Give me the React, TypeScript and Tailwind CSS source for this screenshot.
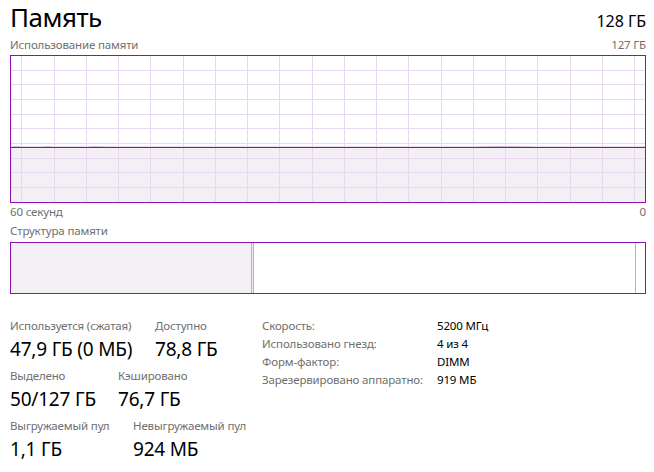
import React from "react";

const PURPLE = "#8b12ae";
const GRID = "#e8d8ef";
const FILL = "#f2f0f4";

// chart inner area (inside the 1px border)
const CW = 634;
const CH = 146;
const USED_Y = 91;

const vLines = Array.from({ length: 20 }, (_, k) => Math.round(10.3 + 32.26 * k) + 0.5);
const hLines = Array.from({ length: 9 }, (_, k) => Math.round(14.65 * (k + 1)) - 0.5);

// small wobbles of the usage line over the last minute
const bumps: [number, number][] = [
  [1, 10],
  [32, 41],
  [77, 94],
  [466, 523],
];

function UsageChart() {
  return (
    <div className="mt-[2px] h-[148px] w-[636px] border border-[#8b12ae]">
      <svg width={CW} height={CH} viewBox={`0 0 ${CW} ${CH}`} className="block">
        <rect x={0} y={USED_Y} width={CW} height={CH - USED_Y} fill={FILL} />
        {vLines.map((x) => (
          <line key={`v${x}`} x1={x} y1={0} x2={x} y2={CH} stroke={GRID} strokeWidth={1} />
        ))}
        {hLines.map((y) => (
          <line key={`h${y}`} x1={0} y1={y} x2={CW} y2={y} stroke={GRID} strokeWidth={1} />
        ))}
        <line x1={0} y1={USED_Y - 0.5} x2={CW} y2={USED_Y - 0.5} stroke="#ead9f0" strokeWidth={1} />
        {bumps.map(([a, b]) => (
          <path
            key={a}
            d={`M${a} ${USED_Y + 0.5} C${a + 3} ${USED_Y - 0.6} ${b - 3} ${USED_Y - 0.6} ${b} ${USED_Y + 0.5}`}
            fill="none"
            stroke="#cfa9dc"
            strokeWidth={1}
          />
        ))}
        <line x1={0} y1={USED_Y + 0.5} x2={CW} y2={USED_Y + 0.5} stroke={PURPLE} strokeWidth={1} />
      </svg>
    </div>
  );
}

function CompositionBar() {
  return (
    <div className="mt-[3px] flex h-[52px] w-[636px] border border-[#8b12ae]">
      <div className="w-[240px] bg-[#f2f0f4]" />
      <div className="w-[1px] bg-[#c9a6d8]" />
      <div className="w-[1px] bg-[#efe6f3]" />
      <div className="w-[1px] bg-[#c9a6d8]" />
      <div className="w-[381px] bg-white" />
      <div className="w-[1px] bg-[#c9a6d8]" />
      <div className="flex-1 bg-white" />
    </div>
  );
}

type StatItem = { label: string; value: string; width?: string };

function Stat({ label, value, width = "" }: StatItem) {
  return (
    <div className={`flex flex-col ${width}`}>
      <span className="text-[11.5px] leading-[18px] tracking-[-0.15px] text-[#6f6f6f]">{label}</span>
      <span className="mt-[2px] text-[19px] leading-[24px] tracking-[-0.2px] text-black">{value}</span>
    </div>
  );
}

const statRows: StatItem[][] = [
  [
    { label: "Используется (сжатая)", value: "47,9 ГБ (0 МБ)", width: "w-[145px]" },
    { label: "Доступно", value: "78,8 ГБ" },
  ],
  [
    { label: "Выделено", value: "50/127 ГБ", width: "w-[108px]" },
    { label: "Кэшировано", value: "76,7 ГБ" },
  ],
  [
    { label: "Выгружаемый пул", value: "1,1 ГБ", width: "w-[123px]" },
    { label: "Невыгружаемый пул", value: "924 МБ" },
  ],
];

const specs = [
  ["Скорость:", "5200 МГц"],
  ["Использовано гнезд:", "4 из 4"],
  ["Форм-фактор:", "DIMM"],
  ["Зарезервировано аппаратно:", "919 МБ"],
];

export default function App() {
  return (
    <div
      className="h-[472px] w-[654px] overflow-hidden bg-white pl-[10px] pr-[8px]"
      style={{ fontFamily: '"Segoe UI", "Noto Sans", sans-serif' }}
    >
      <div className="flex h-[33px] items-baseline justify-between">
        <h1 className="text-[26px] leading-[34px] tracking-[-0.5px] text-black">Память</h1>
        <span className="text-[16px] leading-[16px] text-black">128 ГБ</span>
      </div>

      <div className="mt-[4px] flex justify-between text-[11.5px] leading-[16px] tracking-[-0.15px] text-[#6f6f6f]">
        <span>Использование памяти</span>
        <span>127 ГБ</span>
      </div>
      <UsageChart />

      <div className="mt-[1px] flex justify-between text-[11.5px] leading-[16px] tracking-[-0.15px] text-[#6f6f6f]">
        <span>60 секунд</span>
        <span>0</span>
      </div>
      <div className="mt-[3px] text-[11.5px] leading-[16px] tracking-[-0.15px] text-[#6f6f6f]">
        Структура памяти
      </div>
      <CompositionBar />

      <div className="mt-[23px] flex items-start">
        <div className="flex w-[252px] flex-col gap-[6px]">
          {statRows.map((row, i) => (
            <div key={i} className="flex">
              {row.map((s) => (
                <Stat key={s.label} {...s} />
              ))}
            </div>
          ))}
        </div>

        <div className="grid grid-cols-[175px_auto] text-[11.5px] leading-[18px] tracking-[-0.15px]">
          {specs.map(([k, v]) => (
            <React.Fragment key={k}>
              <span className="text-[#6f6f6f]">{k}</span>
              <span className="text-black">{v}</span>
            </React.Fragment>
          ))}
        </div>
      </div>
    </div>
  );
}
